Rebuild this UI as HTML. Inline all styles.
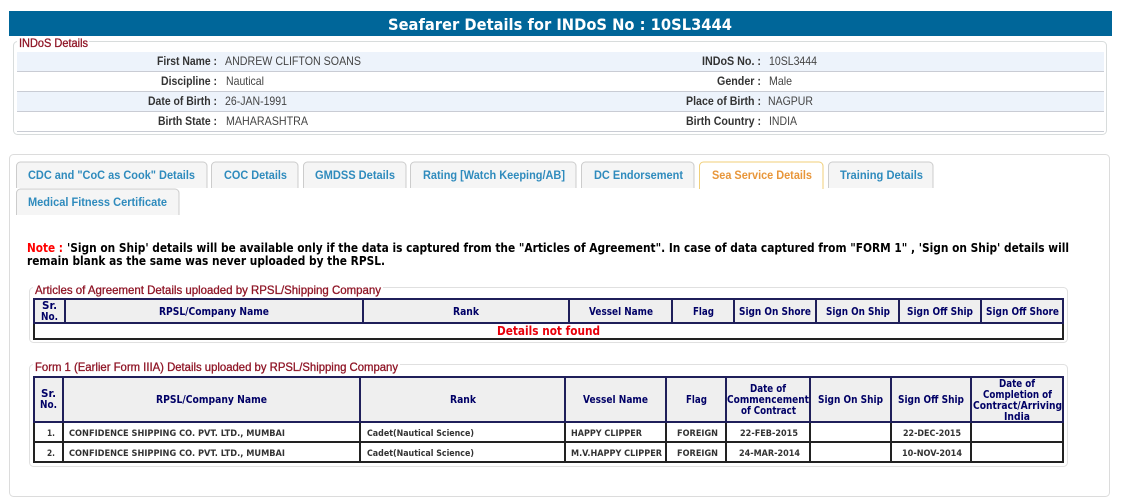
<!DOCTYPE html>
<html><head><meta charset="utf-8"><title>Seafarer Details</title>
<style>
html,body{margin:0;padding:0;background:#fff;width:1142px;height:501px;overflow:hidden}
svg{display:block}
text{white-space:pre}
.s{font-family:"Liberation Sans",Arial,sans-serif}
.d{font-family:"DejaVu Sans",Verdana,sans-serif;font-weight:bold}
.lb{font-size:12px;font-weight:bold;fill:#333}
.v{font-size:12px;fill:#444}
.lg{font-size:12px;fill:#8f1526;stroke:#8f1526;stroke-width:.3px}
.tb{font-size:12px;font-weight:bold;fill:#2f8bbd}
.h{font-size:11px;fill:#000066}
.r{font-size:9px;fill:#333}
.n{font-size:12px;fill:#000}
.tab{fill:#f5f5f5;stroke:#ccc}
</style></head><body>
<svg width="1142" height="501" viewBox="0 0 1142 501" xmlns="http://www.w3.org/2000/svg">
<rect x="9" y="11" width="1103" height="25" fill="#006699"/>
<text class="d" x="388" y="30" font-size="16" fill="#fff" textLength="344" lengthAdjust="spacingAndGlyphs">Seafarer Details for INDoS No : 10SL3444</text>

<rect x="13.5" y="41.5" width="1093" height="93" rx="4" fill="#fff" stroke="#d8dcdc"/>
<rect x="17" y="39" width="72" height="6" fill="#fff"/>
<text class="s lg" x="19" y="47" textLength="69" lengthAdjust="spacingAndGlyphs">INDoS Details</text>
<rect x="17" y="52" width="1087" height="19" fill="#edf3fb"/>
<rect x="17" y="92" width="1087" height="19" fill="#edf3fb"/>
<rect x="17" y="71" width="1087" height="1" fill="#c9ccd4"/>
<rect x="17" y="91" width="1087" height="1" fill="#c9ccd4"/>
<rect x="17" y="111" width="1087" height="1" fill="#c9ccd4"/>
<rect x="17" y="131" width="1087" height="1" fill="#c9ccd4"/>

<g class="s">
<text class="lb" x="157" y="65" textLength="60" lengthAdjust="spacingAndGlyphs">First Name :</text>
<text class="lb" x="161" y="85" textLength="56" lengthAdjust="spacingAndGlyphs">Discipline :</text>
<text class="lb" x="148" y="105" textLength="69" lengthAdjust="spacingAndGlyphs">Date of Birth :</text>
<text class="lb" x="158" y="125" textLength="59" lengthAdjust="spacingAndGlyphs">Birth State :</text>
<text class="v" x="225" y="65" textLength="136" lengthAdjust="spacingAndGlyphs">ANDREW CLIFTON SOANS</text>
<text class="v" x="226" y="85" textLength="38" lengthAdjust="spacingAndGlyphs">Nautical</text>
<text class="v" x="225" y="105" textLength="62" lengthAdjust="spacingAndGlyphs">26-JAN-1991</text>
<text class="v" x="226" y="125" textLength="82" lengthAdjust="spacingAndGlyphs">MAHARASHTRA</text>
<text class="lb" x="702" y="65" textLength="59" lengthAdjust="spacingAndGlyphs">INDoS No. :</text>
<text class="lb" x="717" y="85" textLength="44" lengthAdjust="spacingAndGlyphs">Gender :</text>
<text class="lb" x="686" y="105" textLength="75" lengthAdjust="spacingAndGlyphs">Place of Birth :</text>
<text class="lb" x="686" y="125" textLength="75" lengthAdjust="spacingAndGlyphs">Birth Country :</text>
<text class="v" x="769" y="65" textLength="48" lengthAdjust="spacingAndGlyphs">10SL3444</text>
<text class="v" x="769" y="85" textLength="23" lengthAdjust="spacingAndGlyphs">Male</text>
<text class="v" x="768" y="105" textLength="45" lengthAdjust="spacingAndGlyphs">NAGPUR</text>
<text class="v" x="769" y="125" textLength="28" lengthAdjust="spacingAndGlyphs">INDIA</text>
</g>

<rect x="9.5" y="154.5" width="1100" height="342" rx="4" fill="#fff" stroke="#dcdcdc"/>

<g>
<path class="tab" d="M16.5 188V166a4 4 0 0 1 4-4H203a4 4 0 0 1 4 4V188"/>
<path class="tab" d="M211.5 188V166a4 4 0 0 1 4-4H294a4 4 0 0 1 4 4V188"/>
<path class="tab" d="M303.5 188V166a4 4 0 0 1 4-4H402a4 4 0 0 1 4 4V188"/>
<path class="tab" d="M410.5 188V166a4 4 0 0 1 4-4H572a4 4 0 0 1 4 4V188"/>
<path class="tab" d="M581.5 188V166a4 4 0 0 1 4-4H690a4 4 0 0 1 4 4V188"/>
<path d="M699.5 189V166a4 4 0 0 1 4-4H819a4 4 0 0 1 4 4V189" fill="#fff" stroke="#f0cf7a"/>
<path class="tab" d="M828.5 188V166a4 4 0 0 1 4-4H929a4 4 0 0 1 4 4V188"/>
<path class="tab" d="M16.5 215V193a4 4 0 0 1 4-4H175a4 4 0 0 1 4 4V215"/>
</g>
<g class="s">
<text class="tb" x="28" y="179" textLength="167" lengthAdjust="spacingAndGlyphs">CDC and "CoC as Cook" Details</text>
<text class="tb" x="224" y="179" textLength="63" lengthAdjust="spacingAndGlyphs">COC Details</text>
<text class="tb" x="315" y="179" textLength="80" lengthAdjust="spacingAndGlyphs">GMDSS Details</text>
<text class="tb" x="423" y="179" textLength="142" lengthAdjust="spacingAndGlyphs">Rating [Watch Keeping/AB]</text>
<text class="tb" x="594" y="179" textLength="89" lengthAdjust="spacingAndGlyphs">DC Endorsement</text>
<text class="tb" x="712" y="179" textLength="100" lengthAdjust="spacingAndGlyphs" style="fill:#e8963a">Sea Service Details</text>
<text class="tb" x="840" y="179" textLength="83" lengthAdjust="spacingAndGlyphs">Training Details</text>
<text class="tb" x="28" y="206" textLength="139" lengthAdjust="spacingAndGlyphs">Medical Fitness Certificate</text>
</g>

<g class="d">
<text class="n" x="27" y="252" textLength="36" lengthAdjust="spacingAndGlyphs" style="fill:#f00">Note :</text>
<text class="n" x="67" y="252" textLength="1002" lengthAdjust="spacingAndGlyphs">'Sign on Ship' details will be available only if the data is captured from the "Articles of Agreement". In case of data captured from "FORM 1" , 'Sign on Ship' details will</text>
<text class="n" x="27" y="265" textLength="358" lengthAdjust="spacingAndGlyphs">remain blank as the same was never uploaded by the RPSL.</text>
</g>

<rect x="29.5" y="287.5" width="1038" height="55" rx="4" fill="#fff" stroke="#e0e0e0"/>
<rect x="33" y="285" width="350" height="6" fill="#fff"/>
<text class="s lg" x="35" y="294" textLength="346" lengthAdjust="spacingAndGlyphs">Articles of Agreement Details uploaded by RPSL/Shipping Company</text>

<rect x="33" y="299" width="1031" height="24" fill="#efefef"/>
<g shape-rendering="crispEdges">
<g fill="#1f1f5a">
<rect x="33" y="298" width="1031" height="2"/>
<rect x="33" y="322" width="1031" height="2"/>
<rect x="33" y="298" width="2" height="25"/>
<rect x="1062" y="298" width="2" height="25"/>
<rect x="64" y="298" width="2" height="25"/>
<rect x="362" y="298" width="2" height="25"/>
<rect x="568" y="298" width="2" height="25"/>
<rect x="671" y="298" width="2" height="25"/>
<rect x="733" y="298" width="2" height="25"/>
<rect x="815" y="298" width="2" height="25"/>
<rect x="898" y="298" width="2" height="25"/>
<rect x="980" y="298" width="2" height="25"/>
</g>
<g fill="#222">
<rect x="33" y="338" width="1031" height="2"/>
<rect x="33" y="324" width="2" height="15"/>
<rect x="1062" y="324" width="2" height="15"/>
</g>
</g>
<g class="d">
<text class="h" x="42" y="309" textLength="15" lengthAdjust="spacingAndGlyphs">Sr.</text>
<text class="h" x="41" y="320" textLength="17" lengthAdjust="spacingAndGlyphs">No.</text>
<text class="h" x="159" y="315" textLength="110" lengthAdjust="spacingAndGlyphs">RPSL/Company Name</text>
<text class="h" x="453" y="315" textLength="26" lengthAdjust="spacingAndGlyphs">Rank</text>
<text class="h" x="589" y="315" textLength="64" lengthAdjust="spacingAndGlyphs">Vessel Name</text>
<text class="h" x="693" y="315" textLength="21" lengthAdjust="spacingAndGlyphs">Flag</text>
<text class="h" x="739" y="315" textLength="72" lengthAdjust="spacingAndGlyphs">Sign On Shore</text>
<text class="h" x="826" y="315" textLength="64" lengthAdjust="spacingAndGlyphs">Sign On Ship</text>
<text class="h" x="907" y="315" textLength="66" lengthAdjust="spacingAndGlyphs">Sign Off Ship</text>
<text class="h" x="986" y="315" textLength="73" lengthAdjust="spacingAndGlyphs">Sign Off Shore</text>
<text x="497" y="335" font-size="12" fill="#e8000b" textLength="103" lengthAdjust="spacingAndGlyphs">Details not found</text>
</g>

<rect x="29.5" y="364.5" width="1038" height="102" rx="4" fill="#fff" stroke="#e0e0e0"/>
<rect x="33" y="362" width="367" height="6" fill="#fff"/>
<text class="s lg" x="35" y="371" textLength="363" lengthAdjust="spacingAndGlyphs">Form 1 (Earlier Form IIIA) Details uploaded by RPSL/Shipping Company</text>

<rect x="33" y="377" width="1031" height="45" fill="#efefef"/>
<g shape-rendering="crispEdges">
<g fill="#1f1f5a">
<rect x="33" y="376" width="1031" height="2"/>
<rect x="33" y="421" width="1031" height="2"/>
<rect x="33" y="376" width="2" height="46"/>
<rect x="1062" y="376" width="2" height="46"/>
<rect x="62" y="376" width="2" height="46"/>
<rect x="359" y="376" width="2" height="46"/>
<rect x="564" y="376" width="2" height="46"/>
<rect x="665" y="376" width="2" height="46"/>
<rect x="725" y="376" width="2" height="46"/>
<rect x="809" y="376" width="2" height="46"/>
<rect x="890" y="376" width="2" height="46"/>
<rect x="970" y="376" width="2" height="46"/>
</g>
<g fill="#222">
<rect x="33" y="441" width="1031" height="2"/>
<rect x="33" y="461" width="1031" height="2"/>
<rect x="33" y="423" width="2" height="39"/>
<rect x="1062" y="423" width="2" height="39"/>
<rect x="62" y="423" width="2" height="39"/>
<rect x="359" y="423" width="2" height="39"/>
<rect x="564" y="423" width="2" height="39"/>
<rect x="665" y="423" width="2" height="39"/>
<rect x="725" y="423" width="2" height="39"/>
<rect x="809" y="423" width="2" height="39"/>
<rect x="890" y="423" width="2" height="39"/>
<rect x="970" y="423" width="2" height="39"/>
</g>
</g>
<g class="d">
<text class="h" x="41" y="397" textLength="15" lengthAdjust="spacingAndGlyphs">Sr.</text>
<text class="h" x="40" y="408" textLength="17" lengthAdjust="spacingAndGlyphs">No.</text>
<text class="h" x="156" y="403" textLength="111" lengthAdjust="spacingAndGlyphs">RPSL/Company Name</text>
<text class="h" x="450" y="403" textLength="26" lengthAdjust="spacingAndGlyphs">Rank</text>
<text class="h" x="583" y="403" textLength="65" lengthAdjust="spacingAndGlyphs">Vessel Name</text>
<text class="h" x="686" y="403" textLength="21" lengthAdjust="spacingAndGlyphs">Flag</text>
<text class="h" x="750" y="392" textLength="36" lengthAdjust="spacingAndGlyphs">Date of</text>
<text class="h" x="727" y="403" textLength="82" lengthAdjust="spacingAndGlyphs">Commencement</text>
<text class="h" x="741" y="414" textLength="55" lengthAdjust="spacingAndGlyphs">of Contract</text>
<text class="h" x="818" y="403" textLength="65" lengthAdjust="spacingAndGlyphs">Sign On Ship</text>
<text class="h" x="898" y="403" textLength="66" lengthAdjust="spacingAndGlyphs">Sign Off Ship</text>
<text class="h" x="999" y="387" textLength="36" lengthAdjust="spacingAndGlyphs">Date of</text>
<text class="h" x="983" y="398" textLength="69" lengthAdjust="spacingAndGlyphs">Completion of</text>
<text class="h" x="973" y="409" textLength="89" lengthAdjust="spacingAndGlyphs">Contract/Arriving</text>
<text class="h" x="1004" y="420" textLength="26" lengthAdjust="spacingAndGlyphs">India</text>

<text class="r" x="47" y="436" textLength="8" lengthAdjust="spacingAndGlyphs">1.</text>
<text class="r" x="69" y="436" textLength="216" lengthAdjust="spacingAndGlyphs">CONFIDENCE SHIPPING CO. PVT. LTD., MUMBAI</text>
<text class="r" x="367" y="436" textLength="107" lengthAdjust="spacingAndGlyphs">Cadet(Nautical Science)</text>
<text class="r" x="571" y="436" textLength="71" lengthAdjust="spacingAndGlyphs">HAPPY CLIPPER</text>
<text class="r" x="677" y="436" textLength="41" lengthAdjust="spacingAndGlyphs">FOREIGN</text>
<text class="r" x="740" y="436" textLength="58" lengthAdjust="spacingAndGlyphs">22-FEB-2015</text>
<text class="r" x="903" y="436" textLength="58" lengthAdjust="spacingAndGlyphs">22-DEC-2015</text>

<text class="r" x="47" y="456" textLength="8" lengthAdjust="spacingAndGlyphs">2.</text>
<text class="r" x="69" y="456" textLength="216" lengthAdjust="spacingAndGlyphs">CONFIDENCE SHIPPING CO. PVT. LTD., MUMBAI</text>
<text class="r" x="367" y="456" textLength="107" lengthAdjust="spacingAndGlyphs">Cadet(Nautical Science)</text>
<text class="r" x="571" y="456" textLength="91" lengthAdjust="spacingAndGlyphs">M.V.HAPPY CLIPPER</text>
<text class="r" x="677" y="456" textLength="41" lengthAdjust="spacingAndGlyphs">FOREIGN</text>
<text class="r" x="739" y="456" textLength="61" lengthAdjust="spacingAndGlyphs">24-MAR-2014</text>
<text class="r" x="902" y="456" textLength="60" lengthAdjust="spacingAndGlyphs">10-NOV-2014</text>
</g>
</svg>
</body></html>
